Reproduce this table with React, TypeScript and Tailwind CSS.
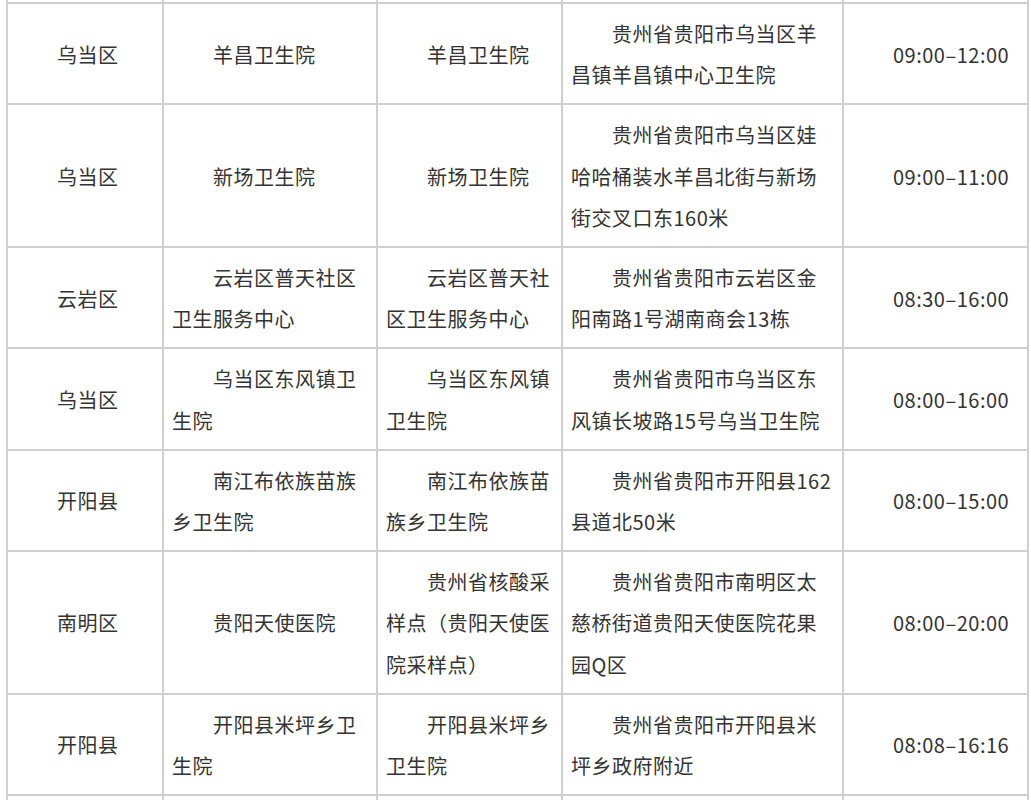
const rows = [
  {
    district: "乌当区",
    site: "羊昌卫生院",
    name: "羊昌卫生院",
    address: "贵州省贵阳市乌当区羊昌镇羊昌镇中心卫生院",
    hours: "09:00–12:00",
  },
  {
    district: "乌当区",
    site: "新场卫生院",
    name: "新场卫生院",
    address: "贵州省贵阳市乌当区娃哈哈桶装水羊昌北街与新场街交叉口东160米",
    hours: "09:00–11:00",
  },
  {
    district: "云岩区",
    site: "云岩区普天社区卫生服务中心",
    name: "云岩区普天社区卫生服务中心",
    address: "贵州省贵阳市云岩区金阳南路1号湖南商会13栋",
    hours: "08:30–16:00",
  },
  {
    district: "乌当区",
    site: "乌当区东风镇卫生院",
    name: "乌当区东风镇卫生院",
    address: "贵州省贵阳市乌当区东风镇长坡路15号乌当卫生院",
    hours: "08:00–16:00",
  },
  {
    district: "开阳县",
    site: "南江布依族苗族乡卫生院",
    name: "南江布依族苗族乡卫生院",
    address: "贵州省贵阳市开阳县162县道北50米",
    hours: "08:00–15:00",
  },
  {
    district: "南明区",
    site: "贵阳天使医院",
    name: "贵州省核酸采样点（贵阳天使医院采样点）",
    address: "贵州省贵阳市南明区太慈桥街道贵阳天使医院花果园Q区",
    hours: "08:00–20:00",
  },
  {
    district: "开阳县",
    site: "开阳县米坪乡卫生院",
    name: "开阳县米坪乡卫生院",
    address: "贵州省贵阳市开阳县米坪乡政府附近",
    hours: "08:08–16:16",
  },
];

const cell =
  "border-2 border-[#cfcfcf] pl-[8px] pr-[6px] pt-[9px] pb-[8px] align-middle text-left indent-[41px] break-all";

const edge = "border-2 border-[#cfcfcf] p-0";

const App = () => {
  return (
    <div className="h-[800px] overflow-hidden bg-white">
      <table
        className="-mt-[8px] ml-[6px] w-[1021px] table-fixed border-collapse text-[20px] leading-[41.2px] tracking-[0.5px] text-[#333]"
        style={{ fontFamily: '"Noto Sans CJK SC", "Noto Sans", sans-serif' }}
      >
        <colgroup>
          <col className="w-[156px]" />
          <col className="w-[214px]" />
          <col className="w-[185px]" />
          <col className="w-[281px]" />
          <col className="w-[185px]" />
        </colgroup>
        <tbody>
          {/* tail of the row above, cut off by the viewport */}
          <tr className="h-[10px]">
            <td className={edge} />
            <td className={edge} />
            <td className={edge} />
            <td className={edge} />
            <td className={edge} />
          </tr>
          {rows.map((row, i) => (
            <tr key={i}>
              <td className={cell}>{row.district}</td>
              <td className={cell}>{row.site}</td>
              <td className={cell}>{row.name}</td>
              <td className={cell}>{row.address}</td>
              <td className={cell}>{row.hours}</td>
            </tr>
          ))}
          {/* start of the next row */}
          <tr className="h-[100px]">
            <td className={edge} />
            <td className={edge} />
            <td className={edge} />
            <td className={edge} />
            <td className={edge} />
          </tr>
        </tbody>
      </table>
    </div>
  );
};

export default App;
